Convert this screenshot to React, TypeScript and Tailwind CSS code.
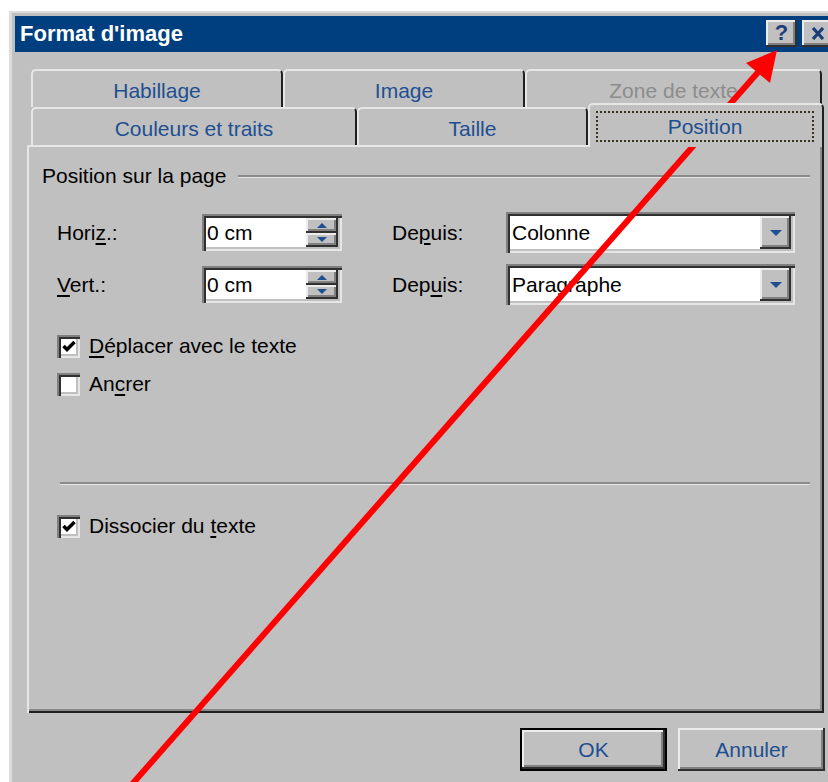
import type { ReactNode } from 'react'

// classic 3D borders, drawn with stacked inset shadows
const raised =
  'shadow-[inset_-2px_-2px_0_#303030,inset_2px_2px_0_#ececec,inset_-4px_-4px_0_#808080]'
const sunken =
  'shadow-[inset_2px_2px_0_#808080,inset_4px_4px_0_#303030,inset_-2px_-2px_0_#e6e6e6,inset_-4px_-4px_0_#c0c0c0]'

function Key({ children }: { children: ReactNode }) {
  return <span className="underline decoration-[1.5px] underline-offset-[3px]">{children}</span>
}

function Tab({ label, width, disabled }: { label: string; width: string; disabled?: boolean }) {
  return (
    <div
      className={`${width} h-[38px] flex items-center justify-center pt-[4px] border-l-2 border-t-2 border-r-2 border-l-[#e6e6e6] border-t-[#e6e6e6] border-r-[#202020] rounded-t-[5px] ${
        disabled ? 'text-[#8c8c8c]' : 'text-[#1d4f91]'
      }`}
    >
      {label}
    </div>
  )
}

function Triangle({ up, w = 10 }: { up?: boolean; w?: number }) {
  const h = Math.round(w / 2)
  return (
    <svg width={w} height={h} viewBox={`0 0 ${w} ${h}`}>
      <polygon points={up ? `0,${h} ${w},${h} ${w / 2},0` : `0,0 ${w},0 ${w / 2},${h}`} fill="#1d4f91" />
    </svg>
  )
}

function Spin({ value }: { value: string }) {
  return (
    <div className={`w-[140px] h-[37px] bg-white ${sunken} flex p-[4px]`}>
      <div className="flex-1 pl-[1px] flex items-center text-black">{value}</div>
      <div className="w-[32px] flex flex-col bg-[#c0c0c0]">
        <div className={`flex-1 flex items-center justify-center ${raised}`}>
          <Triangle up />
        </div>
        <div className={`flex-1 flex items-center justify-center ${raised}`}>
          <Triangle />
        </div>
      </div>
    </div>
  )
}

function Combo({ value }: { value: string }) {
  return (
    <div className={`w-[289px] h-[41px] bg-white ${sunken} flex p-[4px]`}>
      <div className="flex-1 pl-[2px] flex items-center text-black">{value}</div>
      <div className={`w-[31px] bg-[#c0c0c0] flex items-center justify-center ${raised}`}>
        <Triangle w={12} />
      </div>
    </div>
  )
}

function Check({ checked, children }: { checked?: boolean; children: ReactNode }) {
  return (
    <div className="h-[26px] flex items-center gap-[9px]">
      <div className={`w-[23px] h-[23px] bg-white ${sunken} flex items-center justify-center`}>
        {checked && (
          <svg width="14" height="13" viewBox="0 0 14 13" className="ml-[1px] mt-[1px]">
            <path d="M1.5 6 L5 9.5 L12.5 2" fill="none" stroke="#000" strokeWidth="3.5" />
          </svg>
        )}
      </div>
      <span className="text-black">{children}</span>
    </div>
  )
}

function TitleButton({ children }: { children: ReactNode }) {
  return (
    <div
      className={`w-[31px] h-[27px] bg-[#c0c0c0] ${raised} flex items-center justify-center text-[#1c3d78] font-bold text-[22px] leading-none pb-[2px]`}
    >
      {children}
    </div>
  )
}

export default function App() {
  return (
    <div className="relative w-[828px] h-[782px] overflow-hidden bg-white pt-[11px] pl-[9px] font-['Liberation_Sans',Arial,sans-serif] text-[21px]">
      <div className="w-[843px] h-[790px] bg-[#c0c0c0] border-l-[3px] border-t-2 border-[#dcdcdc] pl-[3px] pt-[3px]">
        {/* title bar */}
        <div className="w-[822px] h-[36px] bg-[#003f7f] flex items-start justify-between pl-[5px] pr-[4px] pt-[4px]">
          <span className="text-white font-bold text-[22px] leading-[28px]">Format d'image</span>
          <div className="flex gap-[5px]">
            <TitleButton>?</TitleButton>
            <TitleButton>
              <svg width="14" height="13" viewBox="0 0 14 13" className="mt-[2px]">
                <path d="M2 1 L12 12 M12 1 L2 12" stroke="#1c3d78" strokeWidth="3.2" />
              </svg>
            </TitleButton>
          </div>
        </div>

        <div className="pl-[12px] pt-[17px]">
          {/* tabs */}
          <div className="flex pl-[4px]">
            <Tab label="Habillage" width="w-[252px]" />
            <Tab label="Image" width="w-[242px]" />
            <Tab label="Zone de texte" width="w-[297px]" disabled />
          </div>
          <div className="flex items-end h-[38px] pl-[4px]">
            <Tab label="Couleurs et traits" width="w-[326px]" />
            <Tab label="Taille" width="w-[231px]" />
            <div className="relative z-10 w-[236px] h-[44px] -mb-[2px] bg-[#c0c0c0] border-l-2 border-t-2 border-r-2 border-l-[#e6e6e6] border-t-[#e6e6e6] border-r-[#202020] rounded-t-[5px] pt-[6px] pl-[6px] pr-[8px] pb-[5px]">
              <div className="h-full border-2 border-dotted border-[#3a3020] flex items-center justify-center text-[#1d4f91]">
                Position
              </div>
            </div>
          </div>

          {/* page */}
          <div className="w-[797px] h-[568px] border-l-2 border-t-2 border-[#e6e6e6] shadow-[inset_-2px_-2px_0_#202020,inset_-4px_-4px_0_#8a8a8a] pl-[13px] pr-[14px] pt-[17px] text-black">
            <div className="flex items-center h-[24px]">
              <span>Position sur la page</span>
              <div className="flex-1 ml-[12px] border-t-2 border-b border-t-[#8a8a8a] border-b-[#e6e6e6]" />
            </div>

            <div className="ml-[15px] mt-[24px] flex flex-col gap-[11px]">
              <div className="flex items-center">
                <span className="w-[145px]">
                  Hori<Key>z</Key>.:
                </span>
                <Spin value="0 cm" />
                <span className="ml-[50px] w-[114px]">
                  De<Key>p</Key>uis:
                </span>
                <Combo value="Colonne" />
              </div>
              <div className="flex items-center">
                <span className="w-[145px]">
                  <Key>V</Key>ert.:
                </span>
                <Spin value="0 cm" />
                <span className="ml-[50px] w-[114px]">
                  Dep<Key>u</Key>is:
                </span>
                <Combo value="Paragraphe" />
              </div>
            </div>

            <div className="ml-[15px] mt-[28px] flex flex-col gap-[12px]">
              <Check checked>
                <Key>D</Key>éplacer avec le texte
              </Check>
              <Check>
                An<Key>c</Key>rer
              </Check>
            </div>

            <div className="ml-[18px] mt-[85px] border-t-2 border-b border-t-[#8a8a8a] border-b-[#e6e6e6]" />

            <div className="ml-[15px] mt-[28px]">
              <Check checked>
                Dissocier du <Key>t</Key>exte
              </Check>
            </div>
          </div>

          {/* dialog buttons */}
          <div className="w-[798px] flex justify-end gap-[11px] pt-[15px]">
            <div className="w-[147px] h-[43px] border-2 border-black">
              <div className={`h-full bg-[#c0c0c0] ${raised} flex items-center justify-center text-[#1d4f91]`}>
                OK
              </div>
            </div>
            <div className={`w-[147px] h-[43px] bg-[#c0c0c0] ${raised} flex items-center justify-center text-[#1d4f91]`}>
              Annuler
            </div>
          </div>
        </div>
      </div>

      {/* red pointer arrow */}
      <svg className="absolute inset-0 pointer-events-none" width="828" height="782" viewBox="0 0 828 782">
        <line x1="127" y1="790" x2="760" y2="70" stroke="#ff0000" strokeWidth="6" />
        <polygon points="777,50 746,63 770,83" fill="#ff0000" />
      </svg>
    </div>
  )
}
